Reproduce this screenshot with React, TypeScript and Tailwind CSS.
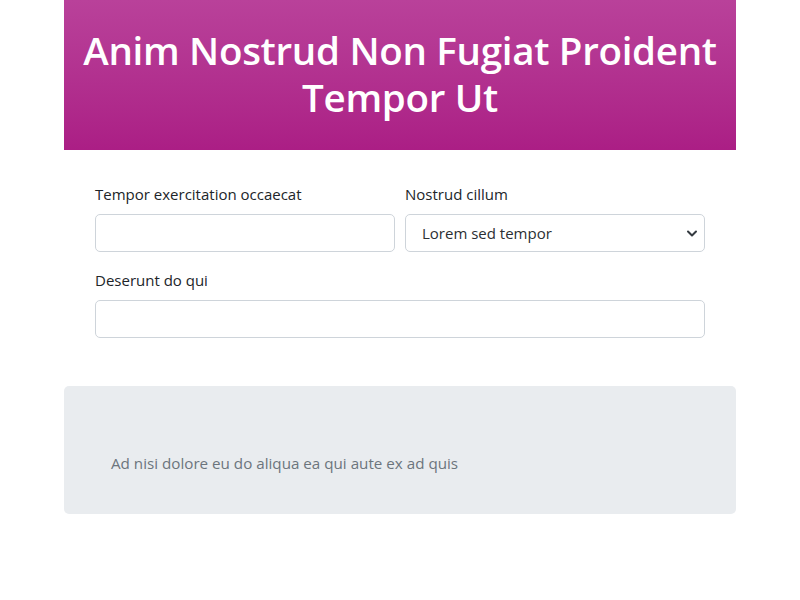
import React from 'react';

export default function App() {
    return (
        <div className="min-h-[600px] bg-white text-[#212529] font-['Open_Sans',sans-serif]">
            <div className="mx-auto w-[672px]">
                {/* Header */}
                <div className="bg-gradient-to-b from-[#b9419a] to-[#ab1e85] pt-[27px] pb-[29px] text-center">
                    <h1 className="text-[38.5px] leading-[47px] font-semibold text-white tracking-[-0.3px]">
                        Anim Nostrud Non Fugiat Proident Tempor Ut
                    </h1>
                </div>

                {/* Form */}
                <div className="px-[31px] pt-8 flex flex-col gap-4">
                    <div className="grid grid-cols-2 gap-[10px]">
                        <div className="flex flex-col">
                            <label className="text-[15px] leading-6 mb-2">Tempor exercitation occaecat</label>
                            <input className="h-[38px] w-full rounded-[5px] border border-[#ced4da] bg-white px-3 outline-none" />
                        </div>
                        <div className="flex flex-col">
                            <label className="text-[15px] leading-6 mb-2">Nostrud cillum</label>
                            <div className="relative h-[38px] w-full rounded-[5px] border border-[#ced4da] bg-white flex items-center pl-4">
                                <span className="text-[15px] text-[#2b2f33]">Lorem sed tempor</span>
                                <svg className="absolute right-[4px] top-[13px]" width="16" height="12" viewBox="0 0 16 12">
                                    <path d="M4 3.5l4 4 4-4" fill="none" stroke="#343a40" strokeWidth="2" strokeLinecap="round" strokeLinejoin="round" />
                                </svg>
                            </div>
                        </div>
                    </div>
                    <div className="flex flex-col">
                        <label className="text-[15px] leading-6 mb-2">Deserunt do qui</label>
                        <input className="h-[38px] w-full rounded-[5px] border border-[#ced4da] bg-white px-3 outline-none" />
                    </div>
                </div>

                {/* Callout */}
                <div className="mt-12 rounded-[5px] bg-[#e9ecef] pt-[65px] pb-[39px] pl-[47px]">
                    <p className="text-[15.2px] leading-6 text-[#6c757d]">Ad nisi dolore eu do aliqua ea qui aute ex ad quis</p>
                </div>
            </div>
        </div>
    );
}
